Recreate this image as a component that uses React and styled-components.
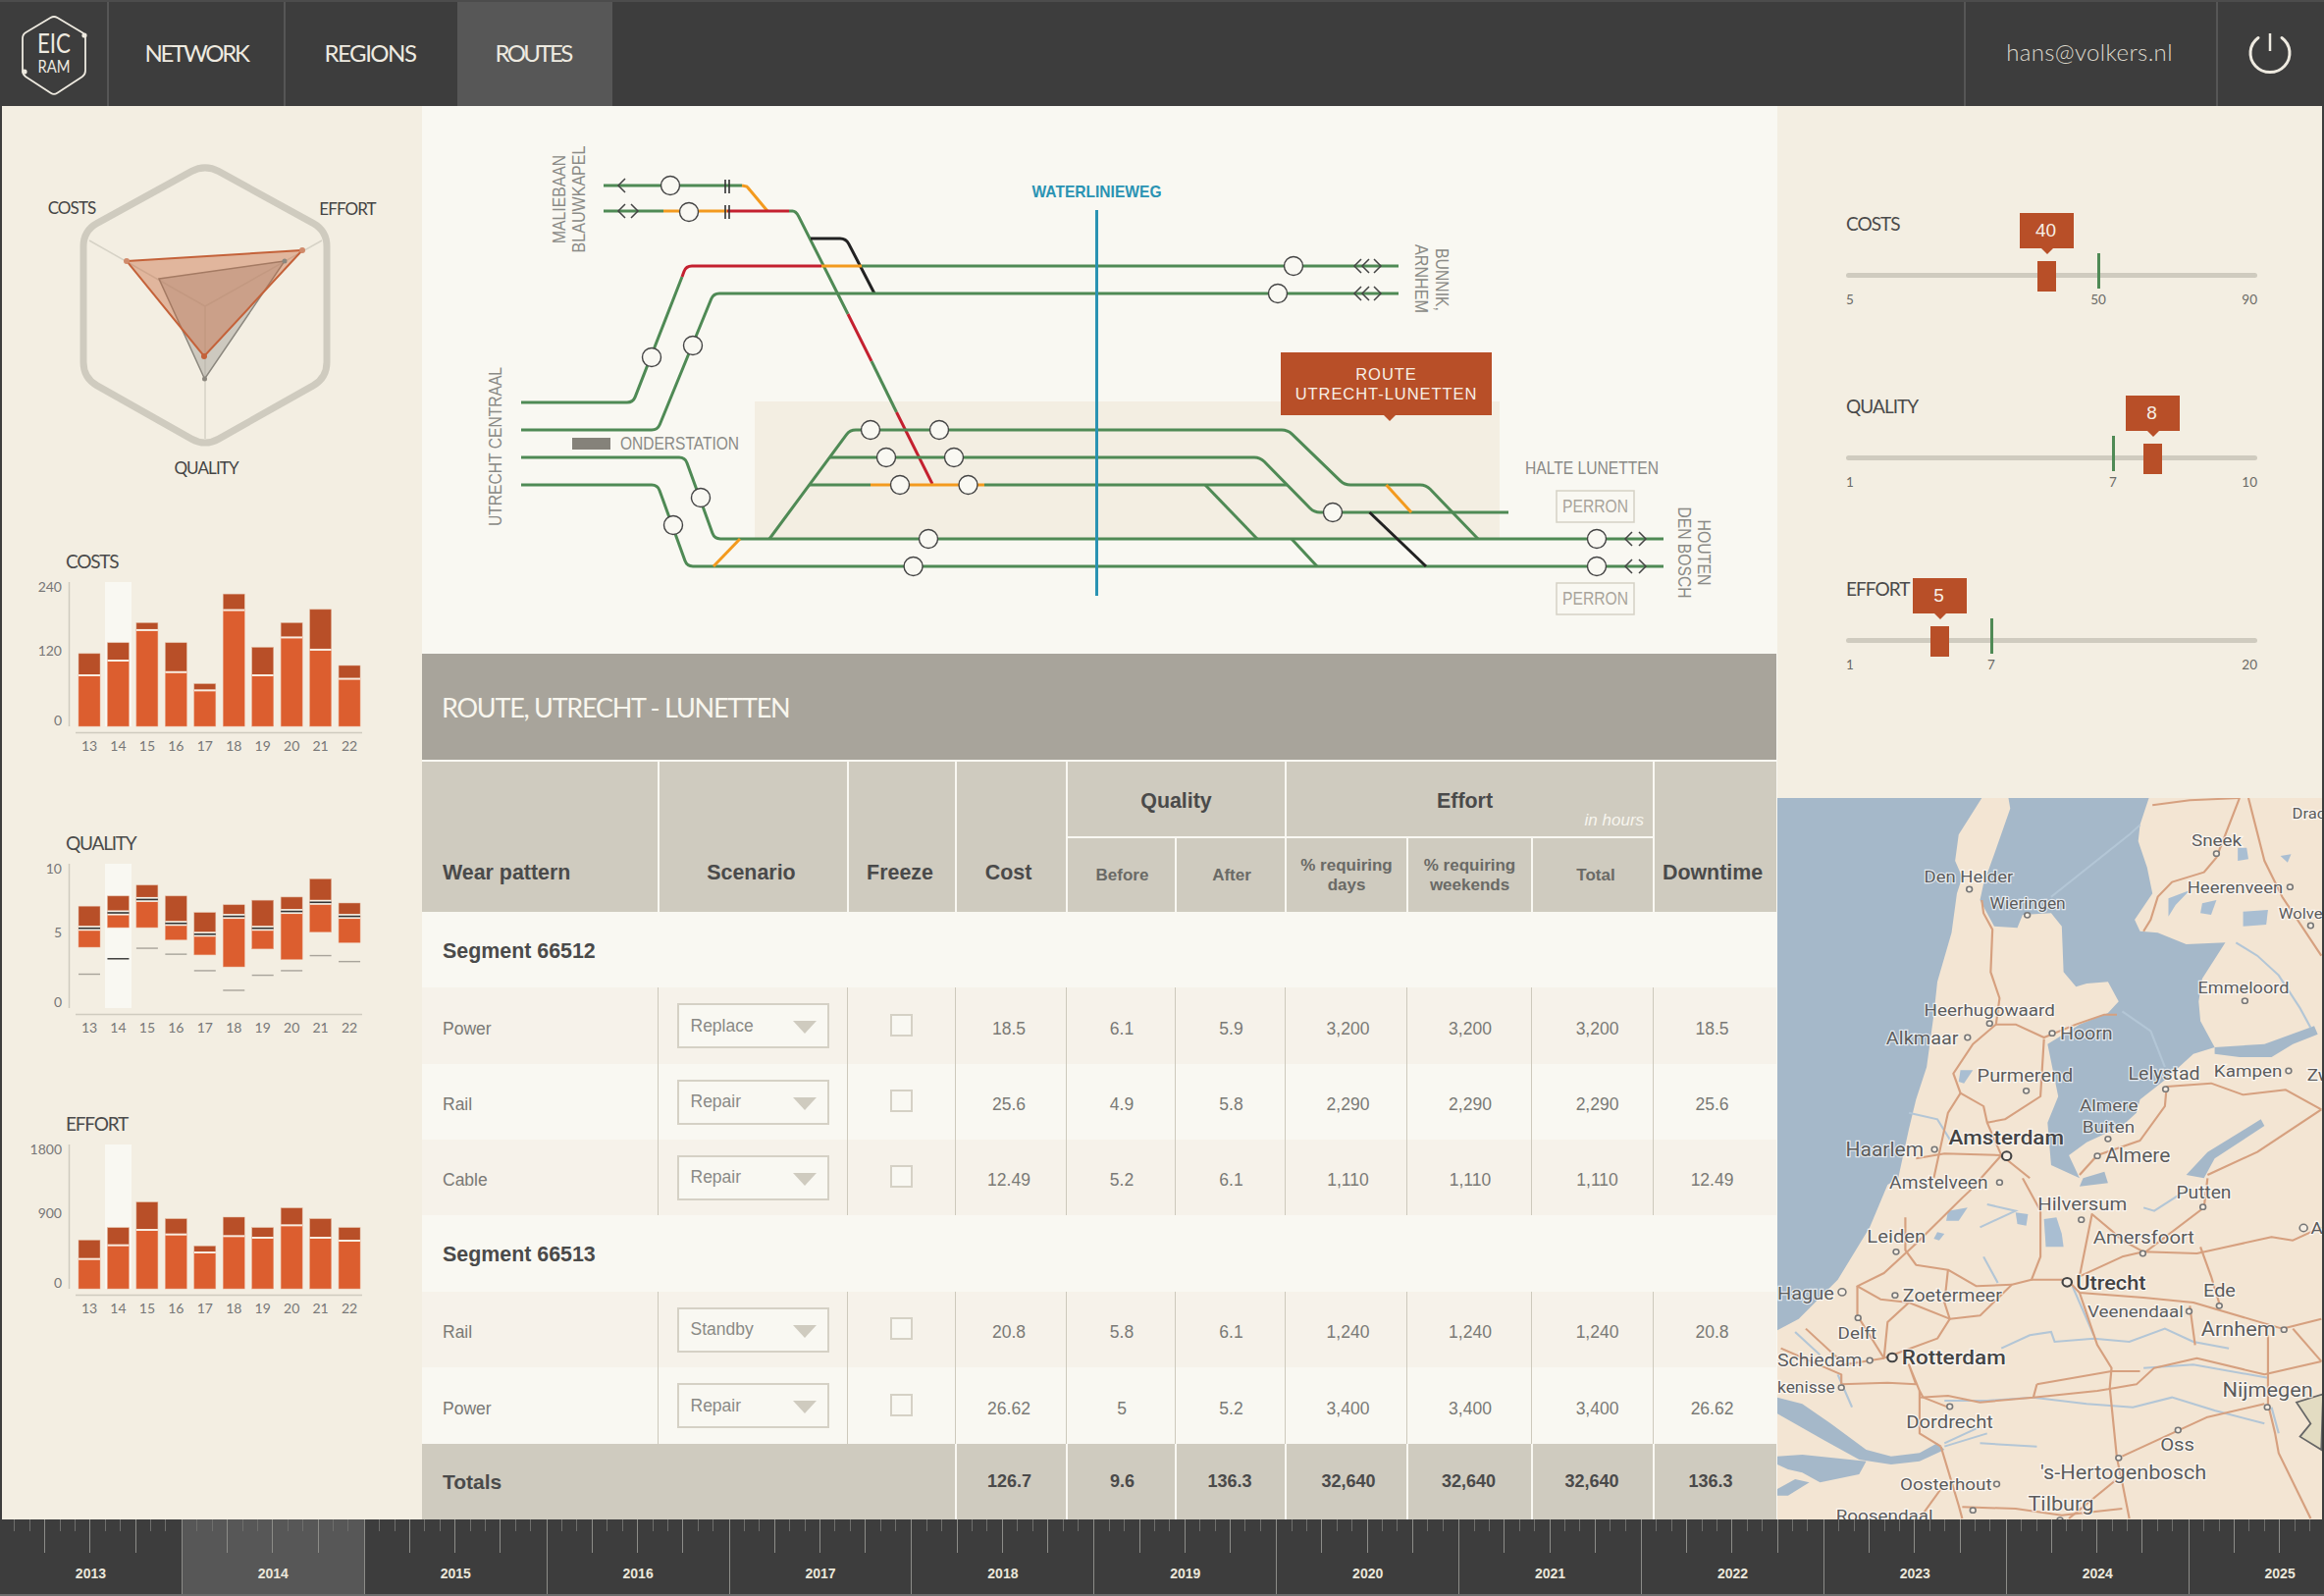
import React from 'react';
import styled, { createGlobalStyle } from 'styled-components';

const DARK = '#3d3d3d';
const CREAM = '#f3eee2';
const PAPER = '#f9f8f2';
const STONE = '#cfcbbf';
const RUST = '#b84f28';
const ORANGE = '#dc5e2f';
const GREEN = '#4f8a55';
const FUTURA = '"Lato", "Liberation Sans", sans-serif';
const HELV = '"Liberation Sans", Arial, sans-serif';

const shiftPadding = s => `padding-left: ${Math.max(0, 2 * (s || 0))}px; padding-right: ${Math.max(0, -2 * (s || 0))}px;`;

const Global = createGlobalStyle`
  html, body { margin: 0; padding: 0; background: ${DARK}; }
  * { box-sizing: border-box; }
`;

const Page = styled.div`
  width: 2368px;
  height: 1626px;
  display: flex;
  flex-direction: column;
  background: ${DARK};
  overflow: hidden;
`;

/* ---------- top bar ---------- */
const TopBar = styled.header`
  height: 108px;
  flex: none;
  display: flex;
  background: ${DARK};
  border-top: 2px solid #4c4c4c;
`;
const LogoCell = styled.div`
  width: 111px;
  display: flex;
  align-items: center;
  justify-content: center;
  border-right: 2px solid #565656;
`;
const NavItem = styled.a`
  width: ${p => p.$w}px;
  display: flex;
  align-items: center;
  justify-content: center;
  font: 400 24px ${FUTURA};
  letter-spacing: ${p => p.$ls}px;
  color: #eeeae0;
  background: ${p => (p.$active ? '#575757' : 'transparent')};
  border-right: ${p => (p.$divider ? '2px solid #565656' : '0')};
  padding: 0 ${p => p.$pr || 0}px 4px 0;
`;
const Spacer = styled.div`
  flex: 1;
`;
const UserCell = styled.div`
  width: 257px;
  display: flex;
  align-items: center;
  justify-content: center;
  font: 300 24px ${FUTURA};
  letter-spacing: 0.35px;
  color: #dcd8cc;
  border-left: 2px solid #565656;
  padding: 0 3px 6px 0;
`;
const PowerCell = styled.div`
  width: 110px;
  display: flex;
  align-items: center;
  justify-content: center;
  border-left: 2px solid #565656;
  padding-right: 2px;
`;
const LogoSvg = styled.svg`
  width: 80px;
  height: 90px;
  display: block;
`;
const LogoText = styled.text`
  font-family: ${FUTURA};
  fill: #eeeae0;
  text-anchor: middle;
`;

/* ---------- main ---------- */
const Main = styled.main`
  flex: 1;
  display: grid;
  grid-template-columns: 428px 1381px 555px;
  margin: 0 2px;
  min-height: 0;
`;
const LeftPanel = styled.aside`
  background: ${CREAM};
  display: flex;
  flex-direction: column;
`;
const RadarSvg = styled.svg`
  width: 428px;
  height: 437px;
  display: block;
  flex: none;
`;
const RadarLabel = styled.text`
  font: 400 17px ${FUTURA};
  letter-spacing: -0.9px;
  fill: #444;
  text-anchor: middle;
  dominant-baseline: middle;
`;
const ChartBlock = styled.section`
  height: 286.5px;
  padding-top: 15px;
  flex: none;
`;
const ChartTitle = styled.h3`
  margin: 0 0 0 65px;
  height: 24px;
  font: 400 19px/23px ${FUTURA};
  letter-spacing: -1.2px;
  color: #4a4a4a;
`;
const ChartSvg = styled.svg`
  width: 428px;
  height: 200px;
  display: block;
`;
const AxisText = styled.text`
  font: 400 14px ${FUTURA};
  fill: #777;
  dominant-baseline: middle;
  text-anchor: ${p => p.$anchor || 'middle'};
`;

const Center = styled.div`
  background: ${PAPER};
  display: flex;
  flex-direction: column;
  min-height: 0;
`;
const DiagramWrap = styled.div`
  position: relative;
  height: 558px;
  flex: none;
`;
const DiagramSvg = styled.svg`
  width: 1381px;
  height: 558px;
  display: block;
`;
const TrackLabel = styled.text`
  font: ${p => p.$weight || 400} ${p => p.$size || 18.5}px ${HELV};
  fill: ${p => p.$color || '#8a8a86'};
  text-anchor: middle;
  dominant-baseline: middle;
`;
const RouteTip = styled.div`
  position: absolute;
  left: 875px;
  top: 251px;
  width: 215px;
  height: 64px;
  background: ${RUST};
  color: #f7efe6;
  font: 400 16.5px/20px ${HELV};
  letter-spacing: 0.95px;
  text-align: center;
  padding-top: 12px;
  &::after {
    content: '';
    position: absolute;
    left: 105px;
    bottom: -6px;
    border-left: 6px solid transparent;
    border-right: 6px solid transparent;
    border-top: 6px solid ${RUST};
  }
`;
const TitleBar = styled.div`
  height: 108px;
  flex: none;
  width: 1380px;
  background: #a8a49b;
  color: #f8f6ee;
  font: 400 27px/110px ${FUTURA};
  letter-spacing: -1.25px;
  padding-left: 20px;
`;

/* ---------- table ---------- */
const Table = styled.table`
  width: 1380px;
  table-layout: fixed;
  border-collapse: separate;
  border-spacing: 0;
  font-family: ${HELV};
`;
const Th = styled.th`
  position: relative;
  background: ${STONE};
  color: ${p => (p.$sub ? '#6a6a66' : '#4a4a4a')};
  font: 700 ${p => (p.$sub ? 17 : 21.4)}px/20px ${HELV};
  text-align: ${p => (p.$left ? 'left' : 'center')};
  vertical-align: ${p => (p.$bottom ? 'bottom' : 'middle')};
  padding: ${p => (p.$bottom ? '0 0 30px' : p.$sub ? '0' : '4px 0 0')};
  ${p => shiftPadding(p.$shift)}
  ${p => (p.$left ? 'padding-left: 21px;' : '')}
  border-left: ${p => (p.$left ? '0' : `2px solid ${PAPER}`)};
  border-top: 2px solid ${PAPER};
`;
const HeadRow = styled.tr`
  height: ${p => p.$h}px;
`;
const InHours = styled.span`
  position: absolute;
  right: 9px;
  bottom: 6px;
  font: italic 400 17px/20px ${HELV};
  color: #f7f5ee;
`;
const Row = styled.tr`
  height: ${p => p.$h}px;
  background: ${p => (p.$alt ? '#f6f2ea' : PAPER)};
`;
const Td = styled.td`
  padding: 6px 0 0;
  ${p => shiftPadding(p.$shift)}
  ${p => (p.$first ? 'padding-left: 21px;' : '')}
  text-align: ${p => (p.$first ? 'left' : 'center')};
  font: 400 17.5px ${HELV};
  color: #7a7a76;
  border-left: ${p => (p.$first ? '0' : '1px solid #cdc9bc')};
`;
const SegmentCell = styled.td`
  padding: 3px 0 0 21px;
  font: 700 21.4px ${HELV};
  color: #4a4a4a;
`;
const TotalsRow = styled.tr`
  height: 77px;
  background: ${STONE};
`;
const TotalCell = styled.td`
  text-align: ${p => (p.$first ? 'left' : 'center')};
  padding: 0;
  ${p => shiftPadding(p.$shift)}
  ${p => (p.$first ? 'padding-left: 21px;' : '')}
  font: 700 ${p => (p.$first ? 21 : 18)}px ${HELV};
  color: #4a4a4a;
  border-left: ${p => (p.$first ? '0' : `2px solid ${PAPER}`)};
`;
const SelectBox = styled.div`
  width: 155px;
  height: 46px;
  margin: -6px auto 0;
  display: flex;
  align-items: center;
  justify-content: space-between;
  padding: 0 11px 0 12px;
  background: ${PAPER};
  border: 2px solid #d5d1c5;
  color: #8a8a86;
  font: 400 17.5px ${HELV};
`;
const Caret = styled.span`
  width: 0;
  height: 0;
  border-left: 12px solid transparent;
  border-right: 12px solid transparent;
  border-top: 13px solid ${STONE};
  margin-top: 3px;
`;
const Check = styled.span`
  display: block;
  width: 23px;
  height: 23px;
  margin: -8px auto 0;
  background: ${PAPER};
  border: 2px solid #d5d1c5;
`;

/* ---------- right ---------- */
const RightPanel = styled.aside`
  background: ${CREAM};
  display: flex;
  flex-direction: column;
  min-height: 0;
`;
const Sliders = styled.div`
  height: 705px;
  flex: none;
  padding: 108px 66px 0 70px;
`;
const SliderBlock = styled.div`
  height: 186px;
`;
const SliderTitle = styled.div`
  font: 400 19px/24px ${FUTURA};
  letter-spacing: -0.95px;
  color: #4a4a4a;
`;
const SliderTrack = styled.div`
  position: relative;
  height: 5px;
  margin-top: 38px;
  border-radius: 3px;
  background: ${STONE};
`;
const Thumb = styled.div`
  position: absolute;
  left: ${p => p.$x}px;
  top: -12px;
  width: 19px;
  height: 31px;
  background: ${RUST};
`;
const ValueTip = styled.div`
  position: absolute;
  left: ${p => p.$x - 18}px;
  top: -61px;
  width: 55px;
  height: 36px;
  background: ${RUST};
  color: #f7efe6;
  font: 400 19px/36px ${HELV};
  text-align: center;
  padding-right: 2px;
  &::after {
    content: '';
    position: absolute;
    left: 22px;
    bottom: -6px;
    border-left: 6px solid transparent;
    border-right: 6px solid transparent;
    border-top: 6px solid ${RUST};
  }
`;
const Target = styled.div`
  position: absolute;
  left: ${p => p.$x}px;
  top: -20px;
  width: 3px;
  height: 36px;
  background: ${GREEN};
`;
const ScaleRow = styled.div`
  position: relative;
  display: flex;
  justify-content: space-between;
  margin-top: 14px;
  font: 400 13.5px/16px ${FUTURA};
  color: #6a6a66;
`;
const ScaleMid = styled.span`
  position: absolute;
  left: ${p => p.$x}px;
  transform: translateX(-50%);
`;
const MapSvg = styled.svg`
  width: 555px;
  height: 735px;
  display: block;
  flex: none;
  background: #f3e5d3;
`;
const MapLabel = styled.text`
  font-family: Roboto, sans-serif;
  font-weight: ${p => (p.$strong ? 500 : 400)};
  font-size: ${p => p.$size || 51}px;
  fill: ${p => (p.$strong ? '#444' : '#5c5c5c')};
  stroke: #fff;
  stroke-opacity: 0.7;
  stroke-width: 7px;
  paint-order: stroke;
`;

/* ---------- timeline ---------- */
const Timeline = styled.footer`
  height: 78px;
  flex: none;
  display: flex;
  overflow: hidden;
  background: ${DARK};
  border-bottom: 2px solid #6c6c6c;
`;
const Year = styled.div`
  flex: none;
  width: 185.9px;
  display: flex;
  flex-direction: column;
  background: ${p => (p.$active ? '#575757' : 'transparent')};
  border-right: 1px solid #8c8c88;
`;
const Ticks = styled.div`
  display: grid;
  grid-template-columns: repeat(12, 1fr);
  height: 34px;
`;
const Tick = styled.i`
  display: block;
  height: ${p => (p.$tall ? 34 : 12)}px;
  border-right: 1px solid ${p => (p.$tall ? '#8c8c88' : '#6e6e6c')};
`;
const YearLabel = styled.div`
  margin-top: 12px;
  text-align: center;
  font: 700 14px/18px ${HELV};
  color: #ebe7da;
`;

/* ---------- helpers ---------- */
function rounded(points, r, closed) {
  const n = points.length;
  const pt = i => points[(i + n) % n];
  const toward = (a, b, d) => {
    const len = Math.hypot(b[0] - a[0], b[1] - a[1]);
    const t = Math.min(d / len, 0.5);
    return [a[0] + (b[0] - a[0]) * t, a[1] + (b[1] - a[1]) * t];
  };
  let d = '';
  const start = closed ? 0 : 1;
  const end = closed ? n : n - 1;
  if (!closed) d += `M${points[0][0]},${points[0][1]}`;
  for (let i = start; i < end; i++) {
    const a = toward(pt(i), pt(i - 1), r);
    const b = toward(pt(i), pt(i + 1), r);
    d += `${d ? 'L' : 'M'}${a[0]},${a[1]}Q${pt(i)[0]},${pt(i)[1]} ${b[0]},${b[1]}`;
  }
  if (closed) d += 'Z';
  else d += `L${points[n - 1][0]},${points[n - 1][1]}`;
  return d;
}

function Logo() {
  const hex = [[40, 6], [72, 25], [72, 66], [40, 87], [8, 66], [8, 25]];
  return (
    <LogoSvg viewBox="0 0 80 90">
      <path d={rounded(hex, 4, true)} fill="none" stroke="#eeeae0" strokeWidth="1.8" />
      <circle cx="71" cy="26" r="2.6" fill="#eeeae0" />
      <circle cx="10" cy="63" r="2.6" fill="#eeeae0" />
      <LogoText x="40" y="44" fontSize="26" textLength="34" lengthAdjust="spacingAndGlyphs">EIC</LogoText>
      <LogoText x="40" y="64" fontSize="17" textLength="33" lengthAdjust="spacingAndGlyphs">RAM</LogoText>
    </LogoSvg>
  );
}

function PowerIcon() {
  return (
    <svg width="60" height="60" viewBox="0 0 60 60">
      <path d="M18,13.5A20,19.5 0 1 0 42,13.5" fill="none" stroke="#eeeae0" strokeWidth="3" strokeLinecap="round" />
      <path d="M30,9V27" stroke="#eeeae0" strokeWidth="2.5" />
    </svg>
  );
}

function Radar() {
  const hex = [[209, 167], [333, 235], [333, 385], [209, 455], [85, 385], [85, 235]];
  return (
    <RadarSvg viewBox="2 108 428 437">
      <path d={rounded(hex, 16, true)} fill="none" stroke={STONE} strokeWidth="7" />
      <path d="M209,312L91,245M209,312L328,245M209,312V447" stroke="#d6d2c6" strokeWidth="1.5" fill="none" />
      <path d="M162,284L290,266L208.5,386Z" fill="#a8a49b" fillOpacity="0.5" stroke="#8b877e" strokeWidth="1.5" />
      <path d="M129,266L308,255L208,363Z" fill="#c9683d" fillOpacity="0.42" stroke="#c4623a" strokeWidth="2" />
      <circle cx="129" cy="266" r="3" fill="#d08a6a" />
      <circle cx="308" cy="255" r="3" fill="#d08a6a" />
      <circle cx="208" cy="363" r="3" fill="#c4623a" />
      <circle cx="290" cy="266" r="2.5" fill="#8b877e" />
      <circle cx="208.5" cy="386" r="2.5" fill="#8b877e" />
      <RadarLabel x="73" y="213.5">COSTS</RadarLabel>
      <RadarLabel x="354" y="215">EFFORT</RadarLabel>
      <RadarLabel x="210" y="479">QUALITY</RadarLabel>
    </RadarSvg>
  );
}

const YEARS = ['13', '14', '15', '16', '17', '18', '19', '20', '21', '22'];

function BarChart({ title, ticks, bars, base, scale, ranged }) {
  const y = v => (v - base) / scale + 9;
  const bx = i => 80 + i * 29.45;
  return (
    <ChartBlock>
      <ChartTitle>{title}</ChartTitle>
      <ChartSvg viewBox="2 0 428 200">
        <rect x="107" y="9" width="27" height="147" fill={PAPER} />
        <path d="M70.5,9V156" stroke={STONE} strokeWidth="1.5" />
        <path d="M77,162.5H369" stroke={STONE} strokeWidth="1.5" />
        {ticks.map((t, i) => (
          <AxisText key={t} $anchor="end" x="63" y={[15, 80, 151][i]}>{t}</AxisText>
        ))}
        {YEARS.map((yr, i) => (
          <AxisText key={yr} x={bx(i) + 11} y="177">{yr}</AxisText>
        ))}
        {bars.map((b, i) => {
          const top = y(b[0]);
          const split = y(b[1]);
          const bottom = ranged ? y(b[2]) : 156;
          return (
            <g key={YEARS[i]}>
              <rect x={bx(i)} y={top} width="22" height={split - top} fill={RUST} stroke="#e4b9a0" strokeWidth="0.5" />
              <rect x={bx(i)} y={split} width="22" height={bottom - split} fill={ORANGE} stroke="#eba587" strokeWidth="0.5" />
              {ranged ? (
                <>
                  <rect x={bx(i)} y={split - 2.5} width="22" height="5" fill="#f6f1e6" />
                  <rect x={bx(i)} y={split - 0.8} width="22" height="1.6" fill="#333" />
                  <rect x={bx(i)} y={y(b[3]) - 0.7} width="22" height="1.4" fill={i === 1 ? '#333' : '#a8a49b'} />
                </>
              ) : (
                <rect x={bx(i)} y={split - 1} width="22" height="2" fill="#f8ece0" />
              )}
            </g>
          );
        })}
      </ChartSvg>
    </ChartBlock>
  );
}

const costBars = [[352, 414], [321, 372], [264, 285], [321, 405], [438, 457], [182, 228], [334, 414], [264, 306], [226, 341], [386, 424]];
const qualityBars = [
  [1071, 1134, 1188, 1265], [1042, 1090, 1132, 1221], [1011, 1052, 1132, 1191], [1042, 1120, 1167, 1208], [1089, 1151, 1210, 1255],
  [1067, 1100, 1244, 1311], [1054, 1134, 1193, 1268], [1045, 1086, 1223, 1255], [993, 1060, 1145, 1212], [1062, 1100, 1175, 1229],
];
const effortBars = [[430, 488], [392, 446], [314, 399], [365, 413], [448, 468], [360, 418], [392, 423], [332, 385], [365, 423], [392, 432]];

const Trk = ({ d, c = GREEN, w = 3 }) => <path d={d} fill="none" stroke={c} strokeWidth={w} />;
const R = '#c4202f';
const O = '#f39a1e';
const K = '#222';

const Chev = ({ x, y, dir }) => (
  <path d={dir < 0 ? `M${x + 4},${y - 7}L${x - 3},${y}L${x + 4},${y + 7}` : `M${x - 4},${y - 7}L${x + 3},${y}L${x - 4},${y + 7}`} fill="none" stroke="#444" strokeWidth="1.5" />
);

const STOPS = [
  [683, 189], [702, 216], [664, 364], [706, 352], [714, 507], [686, 535], [887, 438], [957, 438], [903, 466], [972, 466], [917, 494], [986.5, 494],
  [946, 549], [930.6, 577], [1318, 271], [1302, 299], [1358, 522], [1627, 549], [1627, 577],
];

function Diagram() {
  const line = pts => rounded(pts, 6, false);
  return (
    <DiagramWrap>
      <DiagramSvg viewBox="430 108 1381 558">
        <rect x="769" y="409" width="759" height="139" fill={CREAM} />
        {/* upper left */}
        <Trk d="M615,189H756" />
        <Trk d="M756,189L761,190L782,215" c={O} />
        <Trk d="M615,215H676" />
        <Trk d="M676,215H741" c={O} />
        <Trk d="M741,215H804" c={R} />
        <Trk d={rounded([[804, 215], [811, 215], [864, 320]], 6, false)} />
        <Trk d="M864,320L888,368" c={R} />
        <Trk d="M888,368L913.5,420" />
        <Trk d="M913.5,420L950,493" c={R} />
        <Trk d={line([[826, 243], [862, 243], [891, 299]])} c={K} />
        {/* through tracks */}
        <Trk d={line([[531, 410], [645, 410], [695, 282]])} />
        <Trk d={line([[695, 282], [699, 271], [837, 271]])} c={R} />
        <Trk d="M837,271H878" c={O} />
        <Trk d="M878,271H1425" />
        <Trk d={line([[531, 438], [670, 438], [727, 299], [1425, 299]])} />
        <Trk d={line([[531, 466], [698, 466], [728, 549], [1695, 549]])} />
        <Trk d={line([[531, 494], [670, 494], [700, 577], [1695, 577]])} />
        <Trk d="M727,577L754,549" c={O} />
        {/* yard */}
        <Trk d={line([[784, 549], [866, 438], [1312, 438], [1370, 494], [1453, 494], [1506, 549]])} />
        <Trk d={line([[845, 466], [1284, 466], [1339, 522], [1537, 522]])} />
        <Trk d="M825,494H887" />
        <Trk d="M887,494H1003" c={O} />
        <Trk d="M1003,494H1312" />
        <Trk d="M1228,494L1281,549" />
        <Trk d="M1316,549L1342,577" />
        <Trk d="M1395.5,522L1453,577" c={K} />
        <Trk d="M1412.5,494L1438,522" c={O} />
        <Trk d="M1117.5,214V607" c="#2a93b3" w={3} />
        {STOPS.map(([x, y]) => (
          <circle key={`${x}-${y}`} cx={x} cy={y} r="9.5" fill={PAPER} stroke="#444" strokeWidth="1.4" />
        ))}
        <path d="M739,183V197M743,183V197M739,209V223M743,209V223" stroke="#333" strokeWidth="1.6" />
        <Chev x={633} y={189} dir={-1} />
        <Chev x={633} y={215} dir={-1} />
        <Chev x={647} y={215} dir={1} />
        {[271, 299].map(y => (
          <g key={y}>
            <Chev x={1383} y={y} dir={-1} />
            <Chev x={1391} y={y} dir={-1} />
            <Chev x={1404} y={y} dir={1} />
          </g>
        ))}
        {[549, 577].map(y => (
          <g key={y}>
            <Chev x={1659} y={y} dir={-1} />
            <Chev x={1674} y={y} dir={1} />
          </g>
        ))}
        <TrackLabel transform="translate(571.5,203) rotate(-90)" textLength="90" lengthAdjust="spacingAndGlyphs">MALIEBAAN</TrackLabel>
        <TrackLabel transform="translate(591,203) rotate(-90)" textLength="109" lengthAdjust="spacingAndGlyphs">BLAUWKAPEL</TrackLabel>
        <TrackLabel transform="translate(506.5,455) rotate(-90)" textLength="162" lengthAdjust="spacingAndGlyphs">UTRECHT CENTRAAL</TrackLabel>
        <TrackLabel transform="translate(1468,285) rotate(90)" textLength="64" lengthAdjust="spacingAndGlyphs">BUNNIK,</TrackLabel>
        <TrackLabel transform="translate(1447,284) rotate(90)" textLength="70" lengthAdjust="spacingAndGlyphs">ARNHEM</TrackLabel>
        <TrackLabel transform="translate(1735,563) rotate(90)" textLength="67" lengthAdjust="spacingAndGlyphs">HOUTEN</TrackLabel>
        <TrackLabel transform="translate(1715,563) rotate(90)" textLength="93" lengthAdjust="spacingAndGlyphs">DEN BOSCH</TrackLabel>
        <rect x="583" y="446" width="39" height="12" fill="#85827a" />
        <TrackLabel x="692.5" y="453" textLength="121" lengthAdjust="spacingAndGlyphs">ONDERSTATION</TrackLabel>
        <TrackLabel x="1622" y="478.5" textLength="136" lengthAdjust="spacingAndGlyphs">HALTE LUNETTEN</TrackLabel>
        <rect x="1586" y="500" width="79" height="32" fill={PAPER} stroke="#d5d1c5" strokeWidth="1.5" />
        <rect x="1586" y="594" width="79" height="32" fill={PAPER} stroke="#d5d1c5" strokeWidth="1.5" />
        <TrackLabel x="1625.5" y="517" $size={18} $color="#a8a49b" textLength="67" lengthAdjust="spacingAndGlyphs">PERRON</TrackLabel>
        <TrackLabel x="1625.5" y="611" $size={18} $color="#a8a49b" textLength="67" lengthAdjust="spacingAndGlyphs">PERRON</TrackLabel>
        <TrackLabel x="1117.5" y="196.5" $size={17} $weight={700} $color="#2a93b3" textLength="132" lengthAdjust="spacingAndGlyphs">WATERLINIEWEG</TrackLabel>
      </DiagramSvg>
      <RouteTip>ROUTE<br />UTRECHT-LUNETTEN</RouteTip>
    </DiagramWrap>
  );
}

const WIDTHS = [240, 193, 110, 113, 111, 112, 124, 127, 124, 126];
const VALUE_SHIFT = [-2, 1, 1, 2, 1, 5, -3];
const TOTAL_SHIFT = [-2, 1, -1, 2, -1, -1, -5];
const rowsA = [
  ['Power', 'Replace', '18.5', '6.1', '5.9', '3,200', '3,200', '3,200', '18.5'],
  ['Rail', 'Repair', '25.6', '4.9', '5.8', '2,290', '2,290', '2,290', '25.6'],
  ['Cable', 'Repair', '12.49', '5.2', '6.1', '1,110', '1,110', '1,110', '12.49'],
];
const rowsB = [
  ['Rail', 'Standby', '20.8', '5.8', '6.1', '1,240', '1,240', '1,240', '20.8'],
  ['Power', 'Repair', '26.62', '5', '5.2', '3,400', '3,400', '3,400', '26.62'],
];
const totals = ['126.7', '9.6', '136.3', '32,640', '32,640', '32,640', '136.3'];
const HEIGHTS_A = [78, 77, 77];
const HEIGHTS_B = [77, 78];

function DataRow({ cells, alt, h }) {
  const [name, scenario, ...values] = cells;
  return (
    <Row $alt={alt} $h={h}>
      <Td $first>{name}</Td>
      <Td><SelectBox>{scenario}<Caret /></SelectBox></Td>
      <Td><Check /></Td>
      {values.map((v, i) => <Td key={i} $shift={VALUE_SHIFT[i]}>{v}</Td>)}
    </Row>
  );
}

function RouteTable() {
  return (
    <Table>
      <colgroup>{WIDTHS.map((w, i) => <col key={i} width={w} />)}</colgroup>
      <thead>
        <HeadRow $h={78}>
          <Th rowSpan={2} $left $bottom>Wear pattern</Th>
          <Th rowSpan={2} $bottom $shift={-2}>Scenario</Th>
          <Th rowSpan={2} $bottom $shift={-2}>Freeze</Th>
          <Th rowSpan={2} $bottom $shift={-3}>Cost</Th>
          <Th colSpan={2}>Quality</Th>
          <Th colSpan={3} $shift={-5}>Effort<InHours>in hours</InHours></Th>
          <Th rowSpan={2} $bottom $shift={-3}>Downtime</Th>
        </HeadRow>
        <HeadRow $h={77}>
          <Th $sub $shift={1}>Before</Th>
          <Th $sub $shift={1}>After</Th>
          <Th $sub>% requiring<br />days</Th>
          <Th $sub>% requiring<br />weekends</Th>
          <Th $sub $shift={3}>Total</Th>
        </HeadRow>
      </thead>
      <tbody>
        <Row $h={77}><SegmentCell colSpan={10}>Segment 66512</SegmentCell></Row>
        {rowsA.map((r, i) => <DataRow key={i} cells={r} alt={i % 2 === 0} h={HEIGHTS_A[i]} />)}
        <Row $h={78}><SegmentCell colSpan={10}>Segment 66513</SegmentCell></Row>
        {rowsB.map((r, i) => <DataRow key={i} cells={r} alt={i % 2 === 0} h={HEIGHTS_B[i]} />)}
        <TotalsRow>
          <TotalCell colSpan={3} $first>Totals</TotalCell>
          {totals.map((v, i) => <TotalCell key={i} $shift={TOTAL_SHIFT[i]}>{v}</TotalCell>)}
        </TotalsRow>
      </tbody>
    </Table>
  );
}

const sliders = [
  { name: 'COSTS', value: 40, thumb: 195, target: 255.5, mid: 257, labels: ['5', '50', '90'] },
  { name: 'QUALITY', value: 8, thumb: 303, target: 270.5, mid: 272, labels: ['1', '7', '10'] },
  { name: 'EFFORT', value: 5, thumb: 86, target: 146.5, mid: 148, labels: ['1', '7', '20'] },
];

function Slider({ s }) {
  return (
    <SliderBlock>
      <SliderTitle>{s.name}</SliderTitle>
      <SliderTrack>
        <Target $x={s.target} />
        <Thumb $x={s.thumb} />
        <ValueTip $x={s.thumb}>{s.value}</ValueTip>
      </SliderTrack>
      <ScaleRow>
        <span>{s.labels[0]}</span>
        <ScaleMid $x={s.mid}>{s.labels[1]}</ScaleMid>
        <span>{s.labels[2]}</span>
      </ScaleRow>
    </SliderBlock>
  );
}

const WATER = [
  'M30,38L605,38L575,90L540,150L530,230L550,280L535,330L520,450L480,600L470,700L450,860L420,960L400,1050L370,1200L340,1220L290,1350L200,1510L90,1630L30,1665Z',
  'M680,38L1075,38L1050,120L1045,170L1070,250L1085,330L1035,410L1050,445L1100,450L1180,485L1290,480L1225,590L1215,660L1220,720L1260,800L1200,820L1120,900L1050,960L1040,1000L1000,1040L900,1090L850,1130L880,1200L800,1160L790,1030L820,950L790,790L880,730L960,695L990,660L960,600L900,605L870,615L835,570L830,430L800,390L720,395L705,435L640,430L600,350L610,300L640,210L685,70Z',
  'M1260,800L1400,790L1540,735L1550,760L1480,790L1420,830L1330,830L1260,820Z',
  'M30,1870L100,1890L180,1950L280,2030L350,2050L430,2040L480,2010L500,2030L430,2065L350,2075L260,2060L160,2000L30,1920Z',
  'M30,2050L100,2045L280,2065L260,2105L150,2130L100,2100L60,2090L30,2075Z',
  'M30,2150L80,2120L120,2130L60,2170L30,2170Z',
  'M1180,1190L1240,1120L1390,1020L1400,1040L1260,1140L1230,1200Z',
  'M890,1200L950,1180L960,1215L880,1225Z',
];
const LAKES = [
  'M780,1325L815,1320L830,1370L835,1410L785,1410Z', 'M700,1305L735,1310L730,1345L705,1340Z', 'M1325,190L1350,190L1355,225L1325,230Z',
  'M1340,385L1410,380L1405,425L1340,430Z', 'M1225,360L1265,350L1250,395L1220,390Z', 'M1130,345L1190,320L1150,365L1130,400Z',
  'M1445,215L1475,210L1465,235Z', 'M480,1365L500,1370L485,1390L470,1385Z', 'M510,1300L565,1290L540,1330L505,1330Z', 'M545,870L580,870L555,910L540,905Z',
];
const RIVERS = [
  'M660,1720L740,1680L800,1670L810,1700L920,1690L1020,1700L1120,1660L1200,1700L1300,1720',
  'M500,1880L620,1880L750,1870L900,1890L1030,1900L1140,1870L1260,1910L1400,1950',
  'M1060,1780L1200,1770L1410,1810',
  'M600,2010L760,2020M500,2010L600,1960M500,2020L620,1980',
  'M610,1440L650,1520M620,1280L700,1300L600,1350',
  'M1320,480L1380,520L1440,580L1500,680L1530,740',
  'M860,1530L920,1680M1420,1900L1440,1980',
  'M1060,1290L1090,1300L1190,1230M520,1090L480,1020L400,1000',
  'M800,340L1020,150L1050,120M1000,690L1080,750L1120,860',
  'M150,1740L80,1670M200,1800L240,1900',
];
const ROADS = [
  'M1330,38L1290,150L1265,220L1230,265L1140,295L1100,340L1080,410L1060,445',
  'M1085,60L1190,45L1330,38',
  'M1355,38L1400,230L1450,340L1560,520',
  'M605,350L610,390L635,440L630,570L655,650L645,730L700,730L780,770L870,730L950,700L985,700',
  'M645,730L580,790L525,880L545,940L610,980L620,1030L670,1020L770,950L780,775',
  'M545,940L510,1000L470,1200', 'M620,1030L660,1130L740,1200', 'M420,1140L500,1125L660,1130',
  'M880,1190L930,1130L1050,1085L1120,980L1125,920L1250,910L1340,945L1460,930L1560,990',
  'M1240,1190L1380,1120L1560,990',
  'M720,1200L770,1300L770,1440L745,1510L690,1525L600,1620L515,1630L400,1580L320,1570L255,1530L330,1490L420,1400L550,1260L570,1240L660,1130',
  'M390,1320L390,1420L420,1465L510,1480L590,1530L690,1525',
  'M510,1480L500,1580L515,1630L480,1690L380,1730L330,1750L340,1640L400,1580',
  'M255,1530L255,1620L330,1750', 'M110,1660L220,1770L330,1750', 'M210,1830L340,1825L420,1830L400,1770L430,1850L440,1870L510,1900',
  'M40,1720L210,1800L210,1830',
  'M745,1510L845,1510L880,1550L1060,1565L1200,1580L1450,1660L1560,1630',
  'M880,1500L1000,1440L1060,1425L1210,1430L1420,1380L1480,1390L1560,1350',
  'M1060,1425L1000,1390L970,1360L915,1310L880,1500', 'M1060,1430L1230,1290L1240,1200',
  'M880,1550L930,1710L970,1780L965,1840L985,2055L1000,2130L1020,2240',
  'M760,1830L970,1790L1050,1790M960,1845L1040,1830L1090,1780L1210,1750L1400,1800L1560,1760',
  'M430,1870L510,1865L600,1885L750,1870L760,1830M750,1870L930,1850L960,1845',
  'M1410,1680L1410,1890L1430,1980L1440,2040L1530,2240', 'M1000,2050L1240,1930L1400,1890',
  'M490,2020L540,2200L550,2240M550,2205L700,2210L830,2230L1000,2210', 'M430,2240L490,2150', 'M850,2240L985,2120',
  'M1220,1410L1250,1500L1275,1590', 'M1190,1590L1205,1710', 'M430,1850L430,1980L490,2020', 'M1480,1660L1560,1760',
];
const PLACES = [
  ['Den Helder', 443, 295], ['Wieringen', 628, 377, 48], ['Sneek', 1195, 185, 52], ['Heerenveen', 1183, 330], ['Wolve', 1440, 408, 46], ['Drac', 1478, 102, 46],
  ['Emmeloord', 1213, 635, 50], ['Heerhugowaard', 443, 703, 52], ['Alkmaar', 336, 790, 55], ['Hoorn', 825, 775, 54], ['Purmerend', 592, 905, 55], ['Lelystad', 1017, 900, 54],
  ['Kampen', 1258, 890, 52], ['Zw', 1520, 903, 52], ['Almere', 880, 995, 52], ['Buiten', 888, 1060, 52], ['Almere', 952, 1150, 58], ['Amsterdam', 512, 1098, 62, 1], ['Haarlem', 222, 1133, 58],
  ['Amstelveen', 345, 1233, 53], ['Leiden', 282, 1397, 56], ['Hague', 30, 1570, 55], ['Zoetermeer', 383, 1577, 54], ['Delft', 200, 1690, 52], ['Schiedam', 30, 1775, 54], ['kenisse', 30, 1857, 48],
  ['Rotterdam', 380, 1770, 62, 1], ['Dordrecht', 392, 1963, 56], ['Oosterhout', 375, 2153, 52], ['Roosendaal', 195, 2248, 52], ["'s-Hertogenbosch", 770, 2120, 60], ['Tilburg', 735, 2215, 60],
  ['Oss', 1107, 2033, 56], ['Nijmegen', 1282, 1868, 60], ['Arnhem', 1222, 1683, 60], ['Ede', 1228, 1562, 55], ['Veenendaal', 902, 1625, 52], ['Utrecht', 870, 1540, 60, 1],
  ['Amersfoort', 918, 1400, 56], ['Hilversum', 762, 1297, 56], ['Putten', 1152, 1263, 53], ['A', 1530, 1370, 52],
];
const DOTS = [
  [570, 317], [733, 396], [1265, 208], [1472, 310], [1530, 428], [1345, 658], [627, 727], [565, 770], [803, 757], [730, 933], [1122, 928], [1468, 872], [960, 1080], [930, 1132],
  [472, 1112], [655, 1213], [364, 1425], [212, 1548, 1], [361, 1558], [257, 1627], [290, 1757], [210, 1840], [515, 1898], [647, 2135], [990, 2055], [825, 2245], [1157, 1970],
  [1408, 1900], [1455, 1663], [1273, 1590], [1188, 1607], [1058, 1430], [885, 1327], [1227, 1288], [1510, 1352, 1], [580, 2215],
];
const BIG_DOTS = [[675, 1132], [353, 1748], [845, 1518]];

function NetherlandsMap() {
  return (
    <MapSvg viewBox="30 38 1532 2205" preserveAspectRatio="none">
      <path d="M1490,1885L1530,1950L1500,1990L1560,2030L1565,1860Z" fill="#e3dcc2" stroke="#666" strokeWidth="5" />
      {WATER.map((d, i) => <path key={i} d={d} fill="#a5b8c9" />)}
      {LAKES.map((d, i) => <path key={i} d={d} fill="#a9bed2" />)}
      {RIVERS.map((d, i) => <path key={i} d={d} fill="none" stroke="#b3c6d6" strokeWidth="6" />)}
      {ROADS.map((d, i) => <path key={i} d={d} fill="none" stroke="#d6a07f" strokeWidth="6" strokeLinejoin="round" />)}
      {PLACES.map(([t, x, y, s, strong], i) => <MapLabel key={i} x={x} y={y} $size={s} $strong={strong}>{t}</MapLabel>)}
      {DOTS.map(([x, y, b], i) => <ellipse key={i} cx={x} cy={y} rx={b ? 11 : 8} ry={b ? 11 : 8} fill="#f7efe4" stroke="#777" strokeWidth="4.5" />)}
      {BIG_DOTS.map(([x, y], i) => <ellipse key={i} cx={x} cy={y} rx="13" ry="13" fill="#f7efe4" stroke="#444" strokeWidth="6" />)}
    </MapSvg>
  );
}

const TIMELINE = Array.from({ length: 13 }, (_, i) => 2013 + i);

export default function App() {
  return (
    <Page>
      <Global />
      <TopBar>
        <LogoCell><Logo /></LogoCell>
        <NavItem $w={180} $ls={-2.3} $divider>NETWORK</NavItem>
        <NavItem $w={175} $ls={-1.5} $pr={3}>REGIONS</NavItem>
        <NavItem $w={158} $ls={-2.6} $active $pr={4}>ROUTES</NavItem>
        <Spacer />
        <UserCell>hans@volkers.nl</UserCell>
        <PowerCell><PowerIcon /></PowerCell>
      </TopBar>
      <Main>
        <LeftPanel>
          <Radar />
          <BarChart title="COSTS" ticks={['240', '120', '0']} bars={costBars} base={148} scale={2.8} />
          <BarChart title="QUALITY" ticks={['10', '5', '0']} bars={qualityBars} base={950} scale={2.8} ranged />
          <BarChart title="EFFORT" ticks={['1800', '900', '0']} bars={effortBars} base={138} scale={3} />
        </LeftPanel>
        <Center>
          <Diagram />
          <TitleBar>ROUTE, UTRECHT - LUNETTEN</TitleBar>
          <RouteTable />
        </Center>
        <RightPanel>
          <Sliders>{sliders.map(s => <Slider key={s.name} s={s} />)}</Sliders>
          <NetherlandsMap />
        </RightPanel>
      </Main>
      <Timeline>
        {TIMELINE.map((yr, i) => (
          <Year key={yr} $active={i === 1}>
            <Ticks>
              {Array.from({ length: 11 }, (_, t) => <Tick key={t} $tall={t % 3 === 2} />)}
            </Ticks>
            <YearLabel>{yr}</YearLabel>
          </Year>
        ))}
      </Timeline>
    </Page>
  );
}
